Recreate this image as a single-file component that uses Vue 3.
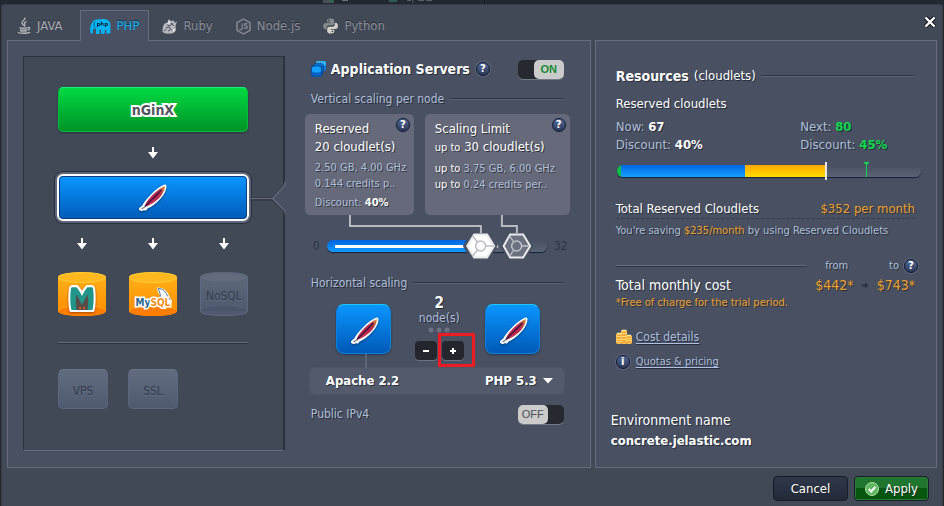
<script setup>
import { ref } from 'vue'

const activeTab = ref('php')
const tabs = [
  { id: 'java', label: 'JAVA' },
  { id: 'php', label: 'PHP' },
  { id: 'ruby', label: 'Ruby' },
  { id: 'node', label: 'Node.js' },
  { id: 'python', label: 'Python' }
]

const serversOn = ref(true)
const ipv4On = ref(false)
const nodes = ref(2)
const phpVersion = ref('PHP 5.3')
const reserved = ref(20)
const limit = ref(30)

const usage = [
  { kind: 'green', share: 1.5 },
  { kind: 'blue', share: 40.5 },
  { kind: 'yellow', share: 26.5 }
]
</script>

<template>
  <div class="page">
    <svg class="behind" width="100%" height="4" aria-hidden="true">
      <rect x="323" y="0" width="11" height="3" fill="#4a4e56" />
      <rect x="330" y="0" width="3" height="2" fill="#1f6b4c" />
      <rect x="342" y="0" width="6" height="1" fill="#6b6f77" />
      <rect x="389" y="0" width="8" height="2" fill="#2c5c50" />
      <path d="M407 .5h4M413 0v3M418 .5h6M426 .5h6" stroke="#5c6068" />
      <path d="M484.500 0v4" stroke="#15181d" />
    </svg>
    <section class="dialog" role="dialog" aria-label="Environment topology">
      <header class="top">
        <nav class="tabs">
          <button v-for="t in tabs" :key="t.id" type="button" class="tab" :class="{ active: activeTab === t.id }" @click="activeTab = t.id">
            <svg v-if="t.id === 'java'" width="14" height="18" viewBox="0 0 14 18" fill="none" stroke="#b4b7bd">
              <path d="M8 .5c1 2-3.500 3.500-3 5.500.2 1 1.500 1.700 1.500 2.800M9.500 4.500C7.500 5.500 7 6.300 7.800 7.500c.5.800 0 1.500-.6 2" stroke-width="1.300" />
              <path d="M2.500 10.500c1.500 1 6.500 1 8 0M3 12.700c2 .9 5 .9 7 0M10.800 10.500c2.500-.6 2.500 2-.3 2.700M1 15c1 1.700 10.500 1.700 12 0" stroke-width="1.300" />
              <path d="M3.500 14.500c2 .6 4.500.6 6 0" />
            </svg>
            <svg v-else-if="t.id === 'php'" width="21" height="17" viewBox="0 0 21 17">
              <path d="M1 16c-1.500-3-1-8 1-11C3 2 6 1 8 1.500 12 .5 17 .5 19 3c2 2 1.500 6 1.300 12.500h-4v-3.700h-1.300l-.4 4H11v-4H9.500V16H6v-5l-2.500-.5C2.500 12 3.500 13.500 3 15z" fill="#00b4f5" />
              <path d="M5.200 3.500C3.500 5 3.500 8 5.500 9.800" fill="none" stroke="#075f8d" />
              <g fill="none" stroke="#0b3149" stroke-width="1.100">
                <path d="M7.500 9V5.500h1.300c1.500 0 1.500 2 0 2H7.600M11.300 3.500v4M11.300 5.500c2-.6 2 0 2 2M15.200 9V5.500h1.300c1.500 0 1.500 2 0 2h-1.200" />
              </g>
            </svg>
            <svg v-else-if="t.id === 'ruby'" width="15" height="15" viewBox="0 0 15 15">
              <path d="M7 0l1.500 2L12 1.500l.3 2.200L15 2.500l-1.500 4L14 11c-1 3-4 3.800-7 3.600-3 .2-5.500-.6-6.500-1.900C1 11 0 9 1.500 6.500 2 4.500 3.500 4 5 4z" fill="#b4b8be" />
              <path d="M5 6l3 1 2.500-3M4 9l3-1 2 3 3.500-2M6 12l2-1M2 12l2.500-2M9 4l3 3" stroke="#4c525e" fill="none" />
              <path d="M7 1l1 3-2.500 1zM10 9l3 1-1.500 3z" fill="#edeef0" />
            </svg>
            <svg v-else-if="t.id === 'node'" width="15" height="17" viewBox="0 0 15 17" fill="none" stroke="#8a8e98">
              <path d="M7.500 1l6.500 3.700v7.600L7.500 16 1 12.300V4.700z" stroke-width="1.400" />
              <path d="M6.200 5.500v5c0 1.600-2.300 1.600-2.700.4M11.300 6.200c-.7-1-3-.9-3 .4 0 1.700 3.200.8 3.200 2.600 0 1.600-3 1.600-3.500.3" stroke-width="1.200" />
            </svg>
            <svg v-else width="15" height="16" viewBox="0 0 15 16">
              <path d="M7.300.5C4.500.5 4 1.500 4 2.800V4.300h3.600v.6H2.600C1 4.900.2 6.200.2 8s.8 3.300 2.100 3.300h1.300V9.500c0-1.300 1-2.300 2.300-2.300h3.400c1 0 1.900-.8 1.900-1.900V2.800C11.200 1.200 9.800.5 7.300.5z" fill="#838b8d" />
              <path d="M8 15.500c2.800 0 3.300-1 3.300-2.300v-1.500H7.700v-.6h5c1.600 0 2.200-1.300 2.200-3.100s-.8-3.300-2.100-3.300h-1v1.800c0 1.300-1 2.300-2.300 2.300H6.100c-1 0-1.900.8-1.900 1.900v2.500c0 1.600 1.400 2.300 3.800 2.300z" fill="#d3d1c7" />
              <circle cx="5.700" cy="2.500" r=".8" fill="#31363f" /><circle cx="9.500" cy="13.500" r=".8" fill="#31363f" />
            </svg>
            <span>{{ t.label }}</span>
          </button>
        </nav>
        <button type="button" class="close" aria-label="Close">
          <svg width="14" height="14" viewBox="0 0 14 14"><path d="M2.500 2.500l9 9M11.500 2.500l-9 9" stroke="#15181e" stroke-width="4.500" /><path d="M2.500 2.500l9 9M11.500 2.500l-9 9" stroke="#fff" stroke-width="2.400" /></svg>
        </button>
      </header>

      <main class="panels">
        <section class="panel left">
          <div class="topology">
            <button type="button" class="balancer"><span class="nginx">nGinX</span></button>
            <div class="arrows"><svg class="down" viewBox="0 0 10 12"><path d="M4 0h2v5h4L5 11.500 0 5h4z" /></svg></div>
            <button type="button" class="appserver" aria-label="Apache">
              <svg class="feather" viewBox="0 0 28 28"><use href="#feather" /></svg>
            </button>
            <div class="arrows three">
              <svg v-for="n in 3" :key="n" class="down" viewBox="0 0 10 12"><path d="M4 0h2v5h4L5 11.500 0 5h4z" /></svg>
            </div>
            <div class="stores">
              <button type="button" class="store" aria-label="Memcached">
                <svg class="cylinder" viewBox="0 0 48 44"><use href="#drum-gold" /></svg>
                <svg class="mark memcached" viewBox="0 0 28 28">
                  <path d="M3 25.500C1.500 20 1.500 9 2.500 3c.3-1.200 1-1.500 2-1.500h4.500c2 2 3.500 4.500 5 7 1.500-2.500 3-5 5-7h4.500c1 0 1.700.3 2 1.500 1 6 1 17-.5 22.500z" fill="#fff" stroke="#fff" stroke-width="3" stroke-linejoin="round" />
                  <path d="M3.500 25C2 19 2 9 3 3.500c.2-1 .8-1.200 1.500-1.200h4c2 2 4 5.500 5.500 8.700 1.500-3.200 3.500-6.700 5.500-8.700h4c.7 0 1.300.2 1.500 1.200 1 5.500 1 15.500-.5 21.500z" fill="#219588" />
                  <path d="M8.500 25C7.500 19 7.500 14 8.500 9.500c2 3 3.500 7 5.500 10.500 2-3.500 3.500-7.500 5.500-10.500 1 4.500 1 9.500 0 15.500z" fill="#574c48" />
                  <circle cx="12" cy="23" r="1" fill="#ff5a14" /><circle cx="16" cy="23" r="1" fill="#ff5a14" />
                </svg>
              </button>
              <button type="button" class="store">
                <svg class="cylinder" viewBox="0 0 48 44"><use href="#drum-gold" /></svg>
                <svg class="mark dolphin" viewBox="0 0 16 18">
                  <path d="M2 1.500c5 0 9 3.500 10 7.500l3 5-1 3-5-1-4-8-2-3z" fill="#fff" stroke="#fff" stroke-width="2" stroke-linejoin="round" />
                  <path d="M2 1.500c5 0 8.500 3.500 9.500 8l3 3.500M2 1.500c1 2 1.500 3 2 5l1 7 2-3 4 6" fill="none" stroke="#407ba0" />
                </svg>
                <span class="mysql"><span>My</span><span class="sql">SQL</span></span>
              </button>
              <button type="button" class="store off">
                <svg class="cylinder" viewBox="0 0 48 44"><use href="#drum-grey" /></svg>
                <span>NoSQL</span>
              </button>
            </div>
            <hr />
            <div class="extras">
              <button type="button">VPS</button>
              <button type="button">SSL</button>
            </div>
            <svg class="notch" width="36" height="32" viewBox="0 0 36 32">
              <path d="M35 1.500v29h-1.500L22 16.500 34 1.500z" fill="#485062" />
              <path d="M0 15.500h22L34 3V0" fill="none" stroke="#2c313e" />
              <path d="M0 16.500h23M35 0v3L23.500 15.500v2L35 29v3" fill="none" stroke="#626779" stroke-width="1.500" />
              <path d="M0 18h22L34 29.500V32" fill="none" stroke="#2c313e" />
            </svg>
          </div>

          <div class="settings">
            <div class="row title">
              <svg width="16" height="16" viewBox="0 0 16 16">
                <rect x="5" y="0" width="10" height="10" rx="2" fill="#067ee0" /><rect x="5" y="0" width="10" height="5" rx="2" fill="#2fb4ff" />
                <rect x="2.500" y="2.500" width="10" height="10" rx="2" fill="#046fd2" stroke="#12335c" stroke-width=".5" />
                <rect x="0" y="5" width="11" height="11" rx="2" fill="#075fc0" stroke="#12335c" stroke-width=".5" /><rect x="1" y="5.500" width="9" height="6" rx="2" fill="#14a0ff" />
              </svg>
              <h2>Application Servers</h2>
              <button type="button" class="help" aria-label="Help">?</button>
              <label class="toggle" :class="{ on: serversOn }">
                <input v-model="serversOn" type="checkbox" aria-label="Application servers" /><span>{{ serversOn ? 'ON' : 'OFF' }}</span>
              </label>
            </div>
            <div class="row rule-row vertical"><span>Vertical scaling per node</span><i class="rule"></i></div>

            <div class="cards">
              <div class="card">
                <button type="button" class="help" aria-label="Help">?</button>
                <p class="big">Reserved</p>
                <p class="big">20 cloudlet(s)</p>
                <p class="small first">2.50 GB, 4.00 GHz</p>
                <p class="small">0.144 credits p..</p>
                <p class="small last">Discount: <b>40%</b></p>
              </div>
              <div class="card">
                <button type="button" class="help" aria-label="Help">?</button>
                <p class="big">Scaling Limit</p>
                <p class="big"><span class="upto">up to</span> 30 cloudlet(s)</p>
                <p class="small first"><span class="upto">up to</span> 3.75 GB, 6.00 GHz</p>
                <p class="small"><span class="upto">up to</span> 0.24 credits per..</p>
              </div>
            </div>

            <svg class="links" viewBox="0 0 265 19"><path d="M45 0v11h131v8M197 0v11h15v8" fill="none" stroke="#b5b9c2" stroke-width="2" /></svg>
            <div class="slider-row">
              <span>0</span>
              <div class="slider">
                <div class="track"></div>
                <svg class="drawn" viewBox="0 0 220 26">
                  <defs>
                    <linearGradient id="fill-blue" x2="0" y2="1"><stop stop-color="#0064e0" /><stop offset="1" stop-color="#129bff" /></linearGradient>
                  </defs>
                  <rect x="0" y="7" width="153" height="12" rx="6" fill="url(#fill-blue)" />
                  <path d="M8 13.500h148" stroke="#fff" stroke-width="3" /><path d="M168 13.500h3" stroke="#fff" stroke-width="2" />
                  <path d="M138 13l7.500-12h15l7.500 12-7.500 12h-15z" fill="#485062" stroke="#485062" stroke-width="4" />
                  <path d="M140 13l7-11.500h13l7 11.500-7 11.500h-13z" fill="#fff" stroke="#e9eaec" stroke-width="2" />
                  <path d="M153.500 13l-8-10M153.500 13h13M153.500 13l-8 10" stroke="#b8bcc3" stroke-width="1.300" /><circle cx="153.500" cy="13" r="5" fill="#fff" stroke="#b8bcc3" stroke-width="1.500" />
                  <path d="M175 13l7.500-12h14l7.500 12-7.500 12h-14z" fill="#485062" stroke="#485062" stroke-width="4" />
                  <path d="M176.500 13l6.500-11.500h13l7 11.500-7 11.500h-13z" fill="#6a707e" stroke="#e9eaec" stroke-width="2" />
                  <path d="M189.500 13l-7-10M189.500 13h12M189.500 13l-7 10" stroke="#c0c3c9" stroke-width="1.300" /><circle cx="189.500" cy="13" r="5" fill="#6a707e" stroke="#c0c3c9" stroke-width="1.500" />
                </svg>
                <input v-model="reserved" type="range" min="0" max="32" aria-label="Reserved cloudlets" />
                <input v-model="limit" type="range" min="0" max="32" aria-label="Scaling limit" />
              </div>
              <span>32</span>
            </div>

            <div class="row rule-row horizontal"><span>Horizontal scaling</span><i class="rule"></i></div>
            <div class="nodes">
              <div class="tile stem"><svg class="feather" viewBox="0 0 28 28"><use href="#feather" /></svg></div>
              <div class="count">
                <b>{{ nodes }}</b>
                <span>node(s)</span>
                <svg width="22" height="6" viewBox="0 0 22 6" fill="#6c7484"><circle cx="3" cy="3" r="2.500" /><circle cx="11" cy="3" r="2.500" /><circle cx="19" cy="3" r="2.500" /></svg>
                <div class="steps">
                  <button type="button" aria-label="Remove node" @click="nodes--"><svg width="8" height="8" viewBox="0 0 8 8"><path d="M1 4h6" stroke="#fff" stroke-width="2" /></svg></button>
                  <button type="button" aria-label="Add node" @click="nodes++"><svg width="8" height="8" viewBox="0 0 8 8"><path d="M1 4h6M4 1v6" stroke="#fff" stroke-width="2" /></svg></button>
                  <div class="highlight"></div>
                </div>
              </div>
              <div class="tile"><svg class="feather" viewBox="0 0 28 28"><use href="#feather" /></svg></div>
            </div>
            <div class="stack">
              <span>Apache 2.2</span>
              <label class="picker">
                <select v-model="phpVersion" aria-label="PHP version"><option>PHP 5.3</option><option>PHP 5.4</option></select>
                <svg width="10" height="6" viewBox="0 0 10 6"><path d="M0 0h10L5 5.500z" fill="#fff" /></svg>
              </label>
            </div>
            <div class="row ip">
              <span>Public IPv4</span>
              <label class="toggle" :class="{ on: ipv4On }">
                <input v-model="ipv4On" type="checkbox" aria-label="Public IPv4" /><span>{{ ipv4On ? 'ON' : 'OFF' }}</span>
              </label>
            </div>
          </div>
        </section>

        <section class="panel right">
          <div class="res-title"><h2>Resources</h2><span>(cloudlets)</span><i class="rule"></i></div>
          <p class="white sub">Reserved cloudlets</p>
          <div class="stats">
            <p>Now: <b>67</b></p><p>Next: <b class="lime">80</b></p>
            <p>Discount: <b>40%</b></p><p>Discount: <b class="lime">45%</b></p>
          </div>
          <div class="usage">
            <div class="bar">
              <div v-for="u in usage" :key="u.kind" :class="u.kind" :style="{ width: u.share + '%' }"></div>
            </div>
            <i class="now-mark"></i>
            <svg class="next-mark" width="5" height="15" viewBox="0 0 5 15"><path d="M0 0h5v1L2.500 3 0 1z" fill="#10d650" /><path d="M2.500 1v14" stroke="#10d650" /></svg>
          </div>
          <div class="total"><span class="white">Total Reserved Cloudlets</span><span class="gold">$352 per month</span></div>
          <p class="note saving">You're saving <span class="gold">$235/month</span> by using Reserved Cloudlets</p>
          <div class="cost-head">
            <i class="rule raised"></i><span class="from">from</span><span class="to">to</span>
            <button type="button" class="help" aria-label="Help">?</button>
          </div>
          <div class="cost">
            <span class="white">Total monthly cost</span>
            <span class="gold">$442*</span>
            <svg width="7" height="7" viewBox="0 0 7 7"><path d="M0 2.500h3V.5L6.500 3.500 3 6.500V4.500H0z" fill="#2b303c" /></svg>
            <span class="gold">$743*</span>
          </div>
          <p class="note gold">*Free of charge for the trial period.</p>
          <div class="link cost-link">
            <svg width="16" height="16" viewBox="0 0 16 16">
              <g fill="#f7a935" stroke="#ffc75a"><rect x="5.500" y="1.500" width="5" height="13" rx="1" /><rect x=".5" y="4.500" width="5" height="10" rx="1" /><rect x="10.500" y="6.500" width="5" height="8" rx="1" /></g>
              <path d="M6 4.500h4M6 7.500h4M6 10.500h4M1 7.500h4M1 10.500h4M1 12.500h4M11 9.500h4M11 11.500h4" stroke="#ffd97a" />
              <path d="M5.500 1.500h5M1 4.500h4M11 6.500h4" stroke="#ffe99a" stroke-width="1.500" />
            </svg>
            <a href="#cost">Cost details</a>
          </div>
          <div class="link quota-link"><span class="help">i</span><a href="#quotas">Quotas &amp; pricing</a></div>
          <div class="env"><p>Environment name</p><b>concrete.jelastic.com</b></div>
        </section>
      </main>

      <footer>
        <button type="button" class="cancel">Cancel</button>
        <button type="button" class="apply">
          <svg width="14" height="14" viewBox="0 0 14 14"><circle cx="7" cy="7" r="6.500" fill="#5fb760" stroke="#a8dda2" /><path d="M3.800 7l2.400 2.500 4.200-4.600" fill="none" stroke="#fff" stroke-width="2" /></svg>
          Apply
        </button>
      </footer>
    </section>

    <svg class="library" width="0" height="0" aria-hidden="true">
      <defs>
        <linearGradient id="gold-body" x2="0" y2="1"><stop stop-color="#ffb41c" /><stop offset="1" stop-color="#ff8a00" /></linearGradient>
        <linearGradient id="grey-body" x2="0" y2="1"><stop stop-color="#5e687a" /><stop offset="1" stop-color="#4e596e" /></linearGradient>
        <linearGradient id="quill" x1="1" x2="0" y2="1"><stop stop-color="#d9a04c" /><stop offset=".2" stop-color="#c0503f" /><stop offset=".4" stop-color="#a81f48" /><stop offset="1" stop-color="#c42a4a" /></linearGradient>
        <g id="drum-gold">
          <path d="M0 5C0 2 10 .5 24 .5S48 2 48 5v34c0 3-10 5-24 5S0 42 0 39z" fill="url(#gold-body)" />
          <ellipse cx="24" cy="39" rx="24" ry="5" fill="#ff7e00" /><path d="M0 39c0-7 48-7 48 0" fill="none" stroke="#ffa51c" />
          <ellipse cx="24" cy="5.500" rx="23.500" ry="5" fill="#ffb91e" stroke="#ffcc38" />
        </g>
        <g id="drum-grey">
          <path d="M.5 5C.5 2 10 .5 24 .5S47.500 2 47.500 5v34c0 3-10 4.500-23.500 4.500S.5 42 .5 39z" fill="url(#grey-body)" stroke="#5d6a82" />
          <ellipse cx="24" cy="5.500" rx="23.500" ry="5" fill="#626c7d" stroke="#596477" /><path d="M.5 39c0-7 47-7 47 0" fill="#49556b" stroke="#55617a" />
        </g>
        <g id="feather">
          <path d="M26 2C22 3.500 17 7.500 13 11.500 9 15.500 6 19 4.500 22.500L1.500 25l1.500.5 2-1 1.500.5 1-1.500C12 21.500 17 17.500 21 13c3-3.500 5-7.500 5-11z" fill="#fff" stroke="#fff" stroke-width="3" stroke-linejoin="round" />
          <path d="M26 2C22 3.500 17 7.500 13 11.500 9 15.500 6.500 19 5.500 23 11 21.500 17 17.500 21 13c3-3.500 5-7.500 5-11z" fill="url(#quill)" />
          <path d="M22.500 6C17 11 11 17 6 22.500" fill="none" stroke="#3d1346" stroke-width="1.500" />
          <path d="M6.500 22.500L2.500 25" stroke="#7b7a86" stroke-width="1.300" />
          <path d="M10 16.500c3-3.500 6-6.500 10-9.500M11 20c4-2.500 7-5.500 10-9" fill="none" stroke="#e2405a" stroke-width=".8" />
        </g>
      </defs>
    </svg>
  </div>
</template>

<style>
body { background: #23272f; }
</style>

<style scoped>
.page { display: flex; flex-direction: column; min-height: 100vh; overflow: hidden; background: #23272f; color: #b0bfd8; font: 12px/16px "DejaVu Sans Condensed", "DejaVu Sans", Tahoma, sans-serif; text-shadow: 1px 1px 0 rgba(25, 29, 39, .7); }
.page *, .page *::before, .page *::after { box-sizing: border-box; }
.behind { display: block; }
.library { position: absolute; }
button { border: 0; padding: 0; background: none; color: inherit; font: inherit; text-shadow: inherit; cursor: pointer; }
p, h2 { margin: 0; font-weight: normal; }
b { color: #fff; }
.white { color: #fff; }
.gold { color: #f0a12c; }
.lime, b.lime { color: #0bd84c; }
.rule { flex: 1; height: 2px; border-top: 1px solid #2f3542; border-bottom: 1px solid #5a6273; }
.rule.raised { border-top-color: #666d7e; border-bottom-color: #2f3542; }

.dialog { flex: 1; display: flex; flex-direction: column; margin: 0 1px; padding: 0 5px; background: #414856; border: 1px solid #363c4a; border-bottom: 0; border-radius: 3px 3px 0 0; }
.top { display: flex; justify-content: space-between; align-items: flex-start; }
.tabs { display: flex; gap: 3px; padding-top: 5px; position: relative; z-index: 1; margin-bottom: -1px; }
.tab { display: flex; align-items: center; gap: 6px; height: 31px; padding: 0 9px; border: 1px solid transparent; border-bottom: 0; color: #8c909b; font-size: 13px; text-shadow: 0 -1px 0 #242934; }
.tab:first-child { padding-right: 13px; color: #a9acb5; }
.tab.active { border-color: #666b7d; background: #485062; color: #0ab9fb; }
.close { display: flex; padding: 10px 0 0; }

.panels { display: grid; grid-template-columns: minmax(0, 585fr) minmax(0, 343fr); gap: 4px; }
.panel { border: 1px solid #666b7d; background: #485062; }
.left { display: grid; grid-template-columns: minmax(0, 262fr) minmax(0, 265fr); gap: 20px; padding: 15px 20px 16px 15px; }

.topology { position: relative; display: flex; flex-direction: column; padding: 30px 35px 41px 34px; background: #414856; border: 1px solid #2d323f; border-right-width: 2px; border-bottom-color: #666b7d; }
.balancer { height: 45px; border-radius: 5px; border: 1px solid #04bd3e; border-top-color: #16f07a; background: linear-gradient(#00da42, #009327); box-shadow: 0 1px 2px #29303c; }
.nginx { color: #50555e; font: bold 14px/24px "DejaVu Sans Condensed", "DejaVu Sans", sans-serif; -webkit-text-stroke: 4px #fff; paint-order: stroke fill; text-shadow: none; }
.arrows { display: flex; justify-content: center; padding: 15px 0; }
.arrows.three { justify-content: space-between; padding: 17px 19px 22px; }
.down { width: 10px; height: 12px; fill: #fff; }
.appserver { display: flex; justify-content: center; align-items: center; height: 47px; margin: 0 -1px; border: 2px solid #fff; border-radius: 6px; background: linear-gradient(#0b96ff, #005bb9); box-shadow: 0 0 0 2px #60667a, 0 0 0 3px #292e3b, inset 0 0 0 1px #0a3f80; }
.feather { width: 28px; height: 28px; filter: drop-shadow(0 1px 1px rgba(0, 0, 0, .4)); }
.stores { display: flex; justify-content: space-between; }
.store { position: relative; display: flex; align-items: center; justify-content: center; width: 48px; height: 44px; }
.cylinder { position: absolute; inset: 0; width: 48px; height: 44px; }
.store > span { position: relative; padding-top: 4px; }
.store.off, .extras { color: #323b4c; text-shadow: 0 1px 0 #657084; }
.memcached { position: relative; width: 28px; height: 28px; margin-top: 9px; filter: drop-shadow(0 1px 1px #a44600); }
.dolphin { position: absolute; left: 27px; top: 15px; width: 16px; height: 18px; }
.store > .mysql { padding-top: 18px; color: #28658f; font: bold 10px/14px "DejaVu Sans Condensed", "DejaVu Sans", sans-serif; -webkit-text-stroke: 3px #fff; paint-order: stroke fill; text-shadow: none; }
.mysql .sql { color: #ef9021; }
hr { width: 100%; height: 2px; margin: 26px 0 25px; border: 0; border-top: 1px solid #666c7c; border-bottom: 1px solid #2d323f; }
.extras { display: flex; gap: 20px; }
.extras button { width: 50px; height: 40px; padding-top: 4px; border: 1px solid #5a677f; border-top-color: #6b7587; border-radius: 5px; background: linear-gradient(#626c7f, #4f5a70); }
.notch { position: absolute; right: -3px; top: 125px; }

.settings { display: flex; flex-direction: column; }
.row { display: flex; align-items: center; padding: 0 6px; }
.title { height: 20px; margin-top: 3px; }
.title svg { margin-right: 4px; }
h2 { color: #fff; font-size: 14px; font-weight: bold; line-height: 20px; }
.help { display: inline-block; flex: none; width: 14px; height: 14px; border: 1px solid #131a2b; border-radius: 50%; background: linear-gradient(#53699a, #2b3858); box-shadow: 0 0 0 1px #5d6680; color: #fff; font: bold 10px/12px "DejaVu Sans", sans-serif; text-align: center; text-shadow: none; }
.title .help { margin-left: 6px; }
.toggle { position: relative; display: flex; margin-left: auto; width: 46px; height: 19px; border-radius: 5px; background: #262930; box-shadow: 0 1px 0 #747a86; }
.toggle input { position: absolute; inset: 0; width: 100%; height: 100%; margin: 0; opacity: 0; }
.toggle span { width: 30px; height: 19px; border-radius: 5px; background: #cbcbcb; color: #4b4e55; font: 11px/19px "Liberation Sans", sans-serif; text-align: center; text-shadow: none; }
.toggle.on { justify-content: flex-end; }
.toggle.on span { color: #158a34; font-weight: bold; }
.rule-row { height: 16px; gap: 6px; }
.vertical { margin-top: 12px; }
.cards { display: grid; grid-template-columns: minmax(0, 109fr) minmax(0, 145fr); gap: 11px; margin-top: 7px; }
.card { position: relative; height: 101px; padding: 6px 0 0 10px; border-radius: 5px; background: #66697a; white-space: nowrap; }
.card .help { position: absolute; top: 4px; right: 4px; }
.big { color: #fff; font-size: 13px; line-height: 18px; }
.small { font-size: 11px; line-height: 16px; }
.small.first { margin-top: 4px; }
.small.last { margin-top: 3px; }
.upto { color: #fff; font-size: 11px; }
.links { display: block; width: 100%; height: 19px; }
.slider-row { display: flex; align-items: center; height: 26px; margin-top: -1px; gap: 7px; padding: 0 2px 0 8px; color: #2d3545; text-shadow: none; }
.slider { position: relative; flex: 1; height: 26px; }
.track { height: 12px; margin-top: 7px; border-radius: 6px; background: linear-gradient(#475061, #596373); box-shadow: 0 1px 1px #162338; }
.drawn { position: absolute; inset: 0; width: 100%; height: 26px; }
.slider input { position: absolute; inset: 0; width: 100%; height: 26px; margin: 0; opacity: 0; }
.horizontal { margin-top: 16px; }
.nodes { display: flex; justify-content: space-between; height: 77px; padding: 0 30px 0 31px; }
.tile { position: relative; display: flex; align-items: center; justify-content: center; width: 55px; height: 50px; margin-top: 13px; border-radius: 8px; border: 1px solid #0b82e0; border-top-color: #18cbff; background: linear-gradient(#0b96ff, #0059b7); box-shadow: 0 1px 2px #2b3242; }
.tile .feather { margin: 4px 0 0 3px; }
.stem::after { content: ""; position: absolute; left: 28px; top: 49px; height: 14px; width: 2px; background: #5d6474; }
.count { display: flex; flex-direction: column; align-items: center; padding: 4px 0 0 3px; }
.count b { font-size: 15px; line-height: 16px; }
.count > span { line-height: 14px; }
.count > svg { margin-top: 2px; }
.steps { position: relative; display: flex; gap: 5px; margin-top: 8px; }
.steps button { display: flex; align-items: center; justify-content: center; width: 22px; height: 19px; border-radius: 4px; background: #23262d; box-shadow: 0 1px 0 #6d7481; }
.highlight { position: absolute; left: 23px; top: -8px; width: 37px; height: 34px; border: 3px solid #ed1c24; pointer-events: none; }
.stack { display: flex; justify-content: space-between; align-items: center; height: 26px; margin: 0 6px 0 5px; padding: 0 11px 0 16px; border-radius: 5px; background: #525a6c; box-shadow: 0 0 0 1px #4e5567; color: #fff; font-size: 13px; font-weight: bold; }
.picker { display: flex; align-items: center; gap: 6px; }
select { appearance: none; border: 0; padding: 0; background: none; color: inherit; font: inherit; text-shadow: inherit; field-sizing: content; }
.ip { height: 20px; margin-top: 10px; }

.right { padding: 25px 21px 15px 20px; }
.res-title { display: flex; align-items: center; gap: 5px; color: #fff; font-size: 13px; }
.sub { margin-top: 9px; font-size: 13px; line-height: 18px; }
.stats { display: grid; grid-template-columns: 185fr 115fr; margin-top: 5px; font-size: 13px; line-height: 18px; }
.usage { position: relative; margin: 11px -6px 0 1px; }
.bar { display: flex; height: 12px; overflow: hidden; border-radius: 6px; background: linear-gradient(#475061, #5a6474); box-shadow: 0 1px 1px #162338; }
.green { background: #08bf45; }
.blue { background: linear-gradient(#0067e3, #15a0ff); }
.yellow { background: linear-gradient(#ffa800, #ffdc00); }
.now-mark { position: absolute; left: 68.5%; top: -3px; width: 2px; height: 18px; background: #e7e8ee; }
.next-mark { position: absolute; left: 81.3%; top: -3px; }
.total { display: flex; justify-content: space-between; margin-top: 23px; border-bottom: 1px dashed #353b49; font-size: 13px; line-height: 18px; }
.note { font-size: 11px; line-height: 16px; }
.saving { margin-top: 4px; }
.cost-head { display: flex; align-items: center; height: 16px; margin: 19px -3px 0 0; font-size: 11px; }
.from { margin-left: 19px; }
.to { margin: 0 5px 0 auto; }
.cost-head .rule { flex: 0 0 63%; }
.cost { display: flex; align-items: center; gap: 8px; margin-top: 1px; font-size: 14px; line-height: 20px; }
.cost .white { margin-right: auto; }
.link { display: flex; align-items: center; gap: 4px; height: 20px; }
.link .help { margin-right: 2px; }
.cost-link { margin-top: 16px; }
.quota-link { margin-top: 5px; font-size: 11px; }
a { color: #aebfdf; text-underline-offset: 2px; }
.env { margin: 38px 0 0 -5px; color: #fff; font-size: 13px; line-height: 20px; }
.env p { font-size: 14px; }
.env b { display: block; margin-top: 1px; }

footer { display: flex; justify-content: flex-end; gap: 6px; padding: 8px 8px 5px 0; }
footer button { display: flex; align-items: center; justify-content: center; gap: 6px; width: 75px; height: 25px; border: 1px solid #171c28; border-radius: 4px; color: #fff; font-size: 13px; }
.cancel { background: linear-gradient(#2f374a, #232938); }
.apply { background: linear-gradient(#20752f 50%, #07560f 50%); box-shadow: inset 0 0 0 1px #2d7a3b; }
</style>
